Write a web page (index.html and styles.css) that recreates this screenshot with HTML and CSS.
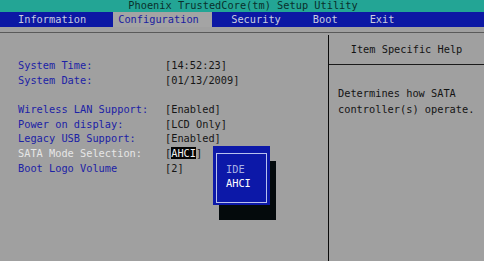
FILE: index.html
```html
<!DOCTYPE html>
<html lang="en">
<head>
  <meta charset="UTF-8" />
  <title>Phoenix TrustedCore(tm) Setup Utility</title>
  <link rel="stylesheet" href="styles.css">
</head>
<body>
  <div class="screen">
    <div class="title">Phoenix TrustedCore(tm) Setup Utility</div>
    <div class="menu">
      <span class="tab">Information</span>
      <span class="tab active">Configuration</span>
      <span class="tab security">Security</span>
      <span class="tab">Boot</span>
      <span class="tab">Exit</span>
    </div>
    <div class="main">
      <div class="settings">
        <div class="row"><span class="label">System Time:</span><span class="value">[14:52:23]</span></div>
        <div class="row"><span class="label">System Date:</span><span class="value">[01/13/2009]</span></div>
        <div class="row blank"></div>
        <div class="row"><span class="label">Wireless LAN Support:</span><span class="value">[Enabled]</span></div>
        <div class="row"><span class="label">Power on display:</span><span class="value">[LCD Only]</span></div>
        <div class="row"><span class="label">Legacy USB Support:</span><span class="value">[Enabled]</span></div>
        <div class="row selected"><span class="label">SATA Mode Selection:</span><span class="value">[<span class="cursor">AHCI</span>]</span></div>
        <div class="row"><span class="label">Boot Logo Volume</span><span class="value">[2]</span></div>
      </div>
      <div class="help">
        <div class="help-title">Item Specific Help</div>
        <div class="help-text">
          Determines how SATA<br>
          controller(s) operate.
        </div>
      </div>
    </div>

    <div class="popup">
      <div class="popup-inner">
        <div class="option">IDE</div>
        <div class="option current">AHCI</div>
      </div>
    </div>
  </div>
</body>
</html>
```

FILE: styles.css
```css
body {
  margin: 0;
  background: #a0a0a0;
  font-family: "DejaVu Sans Mono", "Liberation Mono", monospace;
  font-size: 10.3px;
}
.screen {
  position: relative;
  width: 484px;
  height: 261px;
  overflow: hidden;
  background: #a0a0a0;
}
.title {
  height: 12px;
  line-height: 11px;
  background: #23a595;
  color: #0a302c;
  text-align: center;
  padding-left: 2px;
}
.menu {
  display: flex;
  height: 15px;
  line-height: 15px;
  background: #0c18a4;
  color: #c9cde0;
  padding-left: 13px;
  gap: 22px;
}
.tab {
  padding: 0 5px;
}
.tab.active {
  background: #a4a4a4;
  color: #1a20a0;
  width: 89px;
}
.tab.security {
  margin-left: -8px;
}
.main {
  display: flex;
  margin-top: 5px;
  border-top: 1px solid #5a5a5a;
  height: 228px;
}
.settings {
  width: 310px;
  padding: 25px 0 0 18px;
}
.row {
  display: flex;
  height: 14.7px;
  line-height: 14.7px;
}
.label {
  width: 147px;
  color: #1c22a6;
}
.value {
  color: #161616;
}
.selected .label {
  color: #e6e6e6;
}
.cursor {
  background: #050505;
  color: #f0f0f0;
}
.help {
  flex: 1;
  margin-top: 2px;
  border-left: 1px solid #0a0a0a;
  color: #141414;
}
.help-title {
  height: 29px;
  line-height: 29px;
  text-align: center;
  border-bottom: 1px solid #1a1a1a;
}
.help-text {
  padding: 20px 0 0 9px;
  line-height: 16px;
}
.popup {
  position: absolute;
  left: 213px;
  top: 146px;
  width: 57px;
  height: 59px;
  background: #0c18a8;
  box-shadow: 6px 15px 0 #040a0c;
}
.popup-inner {
  margin: 7px 3px 2px 3px;
  height: 40px;
  border: 1px solid #b8c0ee;
  padding: 8px 0 0 9px;
}
.option {
  line-height: 14px;
  color: #a8b0e4;
}
.option.current {
  color: #ffffff;
}
```
